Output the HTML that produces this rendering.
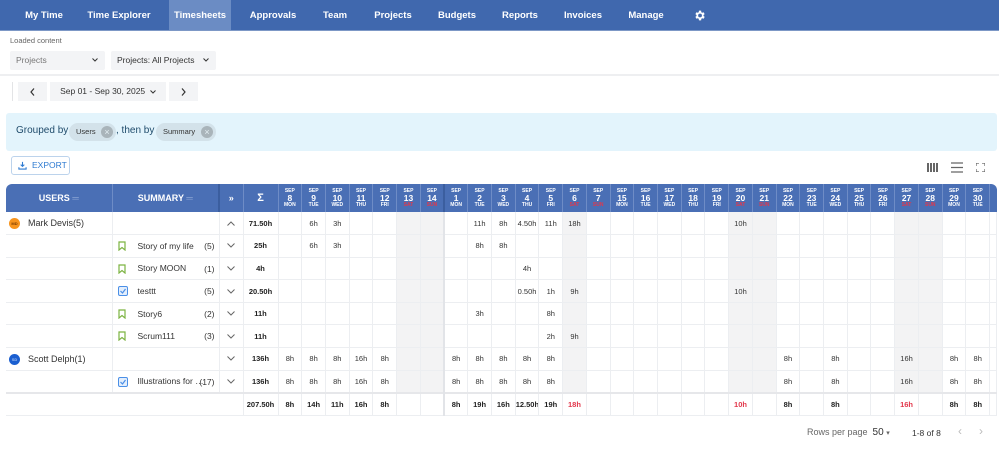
<!DOCTYPE html>
<html><head><meta charset="utf-8"><style>
*{box-sizing:border-box;margin:0;padding:0}
body{width:999px;height:450px;overflow:hidden;background:#fff;font-family:"Liberation Sans",Arial,sans-serif;color:#333;position:relative}
.nav{position:absolute;left:0;top:0;width:999px;height:31px;background:#4068ae;border-bottom:1px solid #7d98c6}
.nav span{position:absolute;top:0;height:30px;line-height:32px;color:#fff;font-weight:bold;font-size:9.5px;transform:translateX(-50%);white-space:nowrap}
.nav .act{background:#6b8cc4;width:62px;text-align:center;left:200px}
.lc{position:absolute;left:10px;top:36px;font-size:7.5px;color:#666}
.dd{position:absolute;top:51px;height:19px;background:#f3f4f6;font-size:8.5px;line-height:19px;padding-left:6px;color:#333;border-radius:2px}
.dd svg{position:absolute;right:7px;top:7px}
.sep{position:absolute;left:0;top:74px;width:999px;height:2px;background:#eeeff1}
.btn{position:absolute;top:82px;height:19px;background:#f3f4f6;font-size:8.5px;line-height:19px;text-align:center;color:#333}
.grp{position:absolute;left:6px;top:113px;width:991px;height:38px;background:#e3f4fc;border-radius:3px}
.grp .t{position:absolute;top:12px;font-size:10px;color:#1f4b6b;white-space:nowrap}
.chip{position:absolute;top:10px;height:18px;border-radius:9px;background:#d3e2ea;font-size:7.5px;line-height:18px;padding-left:7px;color:#333}
.chip b{position:absolute;right:3px;top:3px;width:12px;height:12px;border-radius:6px;background:#a9b4ba;color:#e3eef3;font-size:9px;line-height:12px;text-align:center;font-weight:normal}
.exp{position:absolute;left:11px;top:156px;width:59px;height:19px;border:1px solid #bcd3ec;border-radius:3px;color:#2f7bd1;font-size:8.5px;line-height:17px;padding-left:20px}
table{position:absolute;left:6px;top:184px;border-collapse:collapse;table-layout:fixed;width:991px}
th{background:#4a6fb5;color:#fff;height:28px;border-right:1px solid #6e8cc6;font-size:9px;font-weight:bold;line-height:1}
thead tr th:first-child{border-top-left-radius:6px}
thead tr th:last-child{border-top-right-radius:6px;border-right:none}
th.d{font-size:8.5px;font-weight:bold;line-height:8px}
th.d small{display:block;font-size:5px;line-height:6px}
th.d em{display:block;font-style:normal;font-size:5px;line-height:6px}
th.d em.r{color:#e2374b}
td{height:22.6px;border-right:1px solid #eceef1;border-bottom:1px solid #eceef1;text-align:center;font-size:7.5px;color:#333;white-space:nowrap;overflow:hidden}
td.w{background:#f3f3f4}
td.s{border-left:2px solid #e2e4e8}
th.s{border-left:2px solid #3b5e9f}
td.b{font-weight:bold;color:#222}
td.u{text-align:left;padding-left:22px;font-size:9px;position:relative}
td.m{text-align:left;padding-left:25px;font-size:8.5px;position:relative}
td.m span{position:absolute;right:4px;top:6px;font-size:8.5px}
.av{position:absolute;left:3px;top:6px;width:11px;height:11px;border-radius:6px;font-size:4px;line-height:11px;text-align:center;font-weight:bold}
.bm{position:absolute;left:5px;top:6px}
tr.tot td{font-weight:bold;border-top:2px solid #e6e7ea;color:#222}
.r{color:#e2374b!important}
.pg{position:absolute;top:427px;font-size:9px;color:#666}
</style></head><body>
<div class="nav">
<span style="left:44px">My Time</span><span style="left:119px">Time Explorer</span><span class="act">Timesheets</span><span style="left:273px">Approvals</span><span style="left:335px">Team</span><span style="left:393px">Projects</span><span style="left:457px">Budgets</span><span style="left:520px">Reports</span><span style="left:583px">Invoices</span><span style="left:646px">Manage</span>
<svg style="position:absolute;left:693px;top:9px" width="13" height="13" viewBox="0 0 24 24"><path fill="#fff" d="M19.4 13a7.5 7.5 0 0 0 0-2l2.1-1.6-2-3.5-2.5 1a7.4 7.4 0 0 0-1.7-1L15 3h-4l-.4 2.9a7.4 7.4 0 0 0-1.7 1l-2.5-1-2 3.5L6.5 11a7.5 7.5 0 0 0 0 2l-2.1 1.6 2 3.5 2.5-1a7.4 7.4 0 0 0 1.7 1L11 21h4l.4-2.9a7.4 7.4 0 0 0 1.7-1l2.5 1 2-3.5zM13 15.5a3.5 3.5 0 1 1 0-7 3.5 3.5 0 0 1 0 7z"/></svg>
</div>
<div class="lc">Loaded content</div>
<div class="dd" style="left:10px;width:95px;color:#777">Projects<svg width="6" height="4"><path d="M0.5 0.5l2.5 2.5 2.5-2.5" stroke="#333" fill="none"/></svg></div>
<div class="dd" style="left:111px;width:105px">Projects: All Projects<svg width="6" height="4"><path d="M0.5 0.5l2.5 2.5 2.5-2.5" stroke="#333" fill="none"/></svg></div>
<div class="sep"></div>
<div style="position:absolute;left:12px;top:82px;width:1px;height:19px;background:#e3e4e6"></div>
<div class="btn" style="left:18px;width:29px"><svg width="5" height="8" style="margin-top:6px"><path d="M4 0.5L1 4l3 3.5" stroke="#333" stroke-width="1.2" fill="none"/></svg></div>
<div class="btn" style="left:50px;width:116px">Sep 01 - Sep 30, 2025 &nbsp;<svg width="6" height="4"><path d="M0.5 0.5l2.5 2.5 2.5-2.5" stroke="#333" fill="none"/></svg></div>
<div class="btn" style="left:169px;width:29px"><svg width="5" height="8" style="margin-top:6px"><path d="M1 0.5L4 4 1 7.5" stroke="#333" stroke-width="1.2" fill="none"/></svg></div>
<div class="grp">
<div class="t" style="left:10px">Grouped by</div>
<div class="chip" style="left:63px;width:47px">Users<b>×</b></div>
<div class="t" style="left:110px">, then by</div>
<div class="chip" style="left:150px;width:60px">Summary<b>×</b></div>
</div>
<div class="exp"><svg style="position:absolute;left:6px;top:4px" width="9" height="9" viewBox="0 0 10 10"><path d="M5 1v5M3 4l2 2 2-2M1 7v2h8V7" stroke="#2f7bd1" stroke-width="1.2" fill="none"/></svg>EXPORT</div>
<svg style="position:absolute;left:927px;top:163px" width="11" height="9"><rect x="0" y="0" width="2" height="9" fill="#666"/><rect x="3" y="0" width="2" height="9" fill="#666"/><rect x="6" y="0" width="2" height="9" fill="#666"/><rect x="9" y="0" width="2" height="9" fill="#666"/></svg>
<svg style="position:absolute;left:951px;top:162px" width="12" height="11"><path d="M0 1h12M0 5.5h12M0 10h12" stroke="#666" stroke-width="1.2"/></svg>
<svg style="position:absolute;left:976px;top:163px" width="9" height="9"><path d="M0 3V0h3M6 0h3v3M9 6v3H6M3 9H0V6" stroke="#666" stroke-width="1.2" fill="none"/></svg>

<table>
<colgroup><col style="width:106px"><col style="width:107px"><col style="width:24px"><col style="width:35px">
<col style="width:23.73px"><col style="width:23.73px"><col style="width:23.73px"><col style="width:23.73px"><col style="width:23.73px"><col style="width:23.73px"><col style="width:23.73px"><col style="width:23.73px"><col style="width:23.73px"><col style="width:23.73px"><col style="width:23.73px"><col style="width:23.73px"><col style="width:23.73px"><col style="width:23.73px"><col style="width:23.73px"><col style="width:23.73px"><col style="width:23.73px"><col style="width:23.73px"><col style="width:23.73px"><col style="width:23.73px"><col style="width:23.73px"><col style="width:23.73px"><col style="width:23.73px"><col style="width:23.73px"><col style="width:23.73px"><col style="width:23.73px"><col style="width:23.73px"><col style="width:23.73px"><col style="width:23.73px"><col style="width:23.73px"><col style="width:7px"></colgroup>
<thead><tr>
<th>USERS <span style="color:#8aa3d3">═</span></th><th>SUMMARY <span style="color:#8aa3d3">═</span></th><th style="border-left:2px solid #3b5e9f">»</th><th style="font-size:11px">Σ</th>
<th class="d"><small>SEP</small>8<em>MON</em></th><th class="d"><small>SEP</small>9<em>TUE</em></th><th class="d"><small>SEP</small>10<em>WED</em></th><th class="d"><small>SEP</small>11<em>THU</em></th><th class="d"><small>SEP</small>12<em>FRI</em></th><th class="d"><small>SEP</small>13<em class="r">SAT</em></th><th class="d"><small>SEP</small>14<em class="r">SUN</em></th>
<th class="d s"><small>SEP</small>1<em>MON</em></th><th class="d"><small>SEP</small>2<em>TUE</em></th><th class="d"><small>SEP</small>3<em>WED</em></th><th class="d"><small>SEP</small>4<em>THU</em></th><th class="d"><small>SEP</small>5<em>FRI</em></th><th class="d"><small>SEP</small>6<em class="r">SAT</em></th><th class="d"><small>SEP</small>7<em class="r">SUN</em></th>
<th class="d"><small>SEP</small>15<em>MON</em></th><th class="d"><small>SEP</small>16<em>TUE</em></th><th class="d"><small>SEP</small>17<em>WED</em></th><th class="d"><small>SEP</small>18<em>THU</em></th><th class="d"><small>SEP</small>19<em>FRI</em></th><th class="d"><small>SEP</small>20<em class="r">SAT</em></th><th class="d"><small>SEP</small>21<em class="r">SUN</em></th>
<th class="d"><small>SEP</small>22<em>MON</em></th><th class="d"><small>SEP</small>23<em>TUE</em></th><th class="d"><small>SEP</small>24<em>WED</em></th><th class="d"><small>SEP</small>25<em>THU</em></th><th class="d"><small>SEP</small>26<em>FRI</em></th><th class="d"><small>SEP</small>27<em class="r">SAT</em></th><th class="d"><small>SEP</small>28<em class="r">SUN</em></th>
<th class="d"><small>SEP</small>29<em>MON</em></th><th class="d"><small>SEP</small>30<em>TUE</em></th><th></th>
</tr></thead>
<tbody>
<tr><td class="u"><div class="av" style="background:#f7941d;color:#7a3b00">MD</div>Mark Devis(5)</td><td></td><td><svg width="8" height="5"><path d="M0.5 4.5L4 1l3.5 3.5" stroke="#666" fill="none"/></svg></td><td class="b">71.50h</td>
<td></td><td>6h</td><td>3h</td><td></td><td></td><td class="w"></td><td class="w"></td><td class="s"></td><td>11h</td><td>8h</td><td>4.50h</td><td>11h</td><td class="w">18h</td><td></td><td></td><td></td><td></td><td></td><td></td><td class="w">10h</td><td class="w"></td><td></td><td></td><td></td><td></td><td></td><td class="w"></td><td class="w"></td><td></td><td></td><td></td></tr>

<tr><td></td><td class="m"><svg class="bm" width="8" height="10"><path d="M1 1h6v8L4 6.5 1 9z" stroke="#7cb342" stroke-width="1.2" fill="none"/></svg>Story of my life<span>(5)</span></td><td><svg width="8" height="5"><path d="M0.5 0.5L4 4l3.5-3.5" stroke="#666" fill="none"/></svg></td><td class="b">25h</td>
<td></td><td>6h</td><td>3h</td><td></td><td></td><td class="w"></td><td class="w"></td><td class="s"></td><td>8h</td><td>8h</td><td></td><td></td><td class="w"></td><td></td><td></td><td></td><td></td><td></td><td></td><td class="w"></td><td class="w"></td><td></td><td></td><td></td><td></td><td></td><td class="w"></td><td class="w"></td><td></td><td></td><td></td></tr>

<tr><td></td><td class="m"><svg class="bm" width="8" height="10"><path d="M1 1h6v8L4 6.5 1 9z" stroke="#7cb342" stroke-width="1.2" fill="none"/></svg>Story MOON<span>(1)</span></td><td><svg width="8" height="5"><path d="M0.5 0.5L4 4l3.5-3.5" stroke="#666" fill="none"/></svg></td><td class="b">4h</td>
<td></td><td></td><td></td><td></td><td></td><td class="w"></td><td class="w"></td><td class="s"></td><td></td><td></td><td>4h</td><td></td><td class="w"></td><td></td><td></td><td></td><td></td><td></td><td></td><td class="w"></td><td class="w"></td><td></td><td></td><td></td><td></td><td></td><td class="w"></td><td class="w"></td><td></td><td></td><td></td></tr>

<tr><td></td><td class="m"><svg class="bm" width="10" height="10"><rect x="0.5" y="0.5" width="9" height="9" rx="1.5" fill="#e3eefc" stroke="#4a8fe7"/><path d="M2.5 5l2 2 3-4" stroke="#4a8fe7" stroke-width="1.2" fill="none"/></svg>testtt<span>(5)</span></td><td><svg width="8" height="5"><path d="M0.5 0.5L4 4l3.5-3.5" stroke="#666" fill="none"/></svg></td><td class="b">20.50h</td>
<td></td><td></td><td></td><td></td><td></td><td class="w"></td><td class="w"></td><td class="s"></td><td></td><td></td><td>0.50h</td><td>1h</td><td class="w">9h</td><td></td><td></td><td></td><td></td><td></td><td></td><td class="w">10h</td><td class="w"></td><td></td><td></td><td></td><td></td><td></td><td class="w"></td><td class="w"></td><td></td><td></td><td></td></tr>

<tr><td></td><td class="m"><svg class="bm" width="8" height="10"><path d="M1 1h6v8L4 6.5 1 9z" stroke="#7cb342" stroke-width="1.2" fill="none"/></svg>Story6<span>(2)</span></td><td><svg width="8" height="5"><path d="M0.5 0.5L4 4l3.5-3.5" stroke="#666" fill="none"/></svg></td><td class="b">11h</td>
<td></td><td></td><td></td><td></td><td></td><td class="w"></td><td class="w"></td><td class="s"></td><td>3h</td><td></td><td></td><td>8h</td><td class="w"></td><td></td><td></td><td></td><td></td><td></td><td></td><td class="w"></td><td class="w"></td><td></td><td></td><td></td><td></td><td></td><td class="w"></td><td class="w"></td><td></td><td></td><td></td></tr>

<tr><td></td><td class="m"><svg class="bm" width="8" height="10"><path d="M1 1h6v8L4 6.5 1 9z" stroke="#7cb342" stroke-width="1.2" fill="none"/></svg>Scrum111<span>(3)</span></td><td><svg width="8" height="5"><path d="M0.5 0.5L4 4l3.5-3.5" stroke="#666" fill="none"/></svg></td><td class="b">11h</td>
<td></td><td></td><td></td><td></td><td></td><td class="w"></td><td class="w"></td><td class="s"></td><td></td><td></td><td></td><td>2h</td><td class="w">9h</td><td></td><td></td><td></td><td></td><td></td><td></td><td class="w"></td><td class="w"></td><td></td><td></td><td></td><td></td><td></td><td class="w"></td><td class="w"></td><td></td><td></td><td></td></tr>

<tr><td class="u"><div class="av" style="background:#1b5fd0;color:#9dbcf0">SD</div>Scott Delph(1)</td><td></td><td><svg width="8" height="5"><path d="M0.5 0.5L4 4l3.5-3.5" stroke="#666" fill="none"/></svg></td><td class="b">136h</td>
<td>8h</td><td>8h</td><td>8h</td><td>16h</td><td>8h</td><td class="w"></td><td class="w"></td><td class="s">8h</td><td>8h</td><td>8h</td><td>8h</td><td>8h</td><td class="w"></td><td></td><td></td><td></td><td></td><td></td><td></td><td class="w"></td><td class="w"></td><td>8h</td><td></td><td>8h</td><td></td><td></td><td class="w">16h</td><td class="w"></td><td>8h</td><td>8h</td><td></td></tr>

<tr><td></td><td class="m"><svg class="bm" width="10" height="10"><rect x="0.5" y="0.5" width="9" height="9" rx="1.5" fill="#e3eefc" stroke="#4a8fe7"/><path d="M2.5 5l2 2 3-4" stroke="#4a8fe7" stroke-width="1.2" fill="none"/></svg>Illustrations for …<span>(17)</span></td><td><svg width="8" height="5"><path d="M0.5 0.5L4 4l3.5-3.5" stroke="#666" fill="none"/></svg></td><td class="b">136h</td>
<td>8h</td><td>8h</td><td>8h</td><td>16h</td><td>8h</td><td class="w"></td><td class="w"></td><td class="s">8h</td><td>8h</td><td>8h</td><td>8h</td><td>8h</td><td class="w"></td><td></td><td></td><td></td><td></td><td></td><td></td><td class="w"></td><td class="w"></td><td>8h</td><td></td><td>8h</td><td></td><td></td><td class="w">16h</td><td class="w"></td><td>8h</td><td>8h</td><td></td></tr>

<tr class="tot"><td style="border-right:none"></td><td style="border-right:none"></td><td></td><td>207.50h</td>
<td>8h</td><td>14h</td><td>11h</td><td>16h</td><td>8h</td><td></td><td></td><td class="s">8h</td><td>19h</td><td>16h</td><td>12.50h</td><td>19h</td><td class="r">18h</td><td></td><td></td><td></td><td></td><td></td><td></td><td class="r">10h</td><td></td><td>8h</td><td></td><td>8h</td><td></td><td></td><td class="r">16h</td><td></td><td>8h</td><td>8h</td><td></td></tr>
</tbody></table>
<div class="pg" style="left:807px">Rows per page &nbsp;<span style="color:#333;font-size:10px">50</span> <span style="font-size:7px">▾</span></div>
<div class="pg" style="left:912px;color:#333;font-size:8.5px;top:428px">1-8 of 8</div>
<div class="pg" style="left:958px;color:#bbb;font-size:12px;top:424px">&lsaquo;</div>
<div class="pg" style="left:979px;color:#bbb;font-size:12px;top:424px">&rsaquo;</div>
</body></html>
